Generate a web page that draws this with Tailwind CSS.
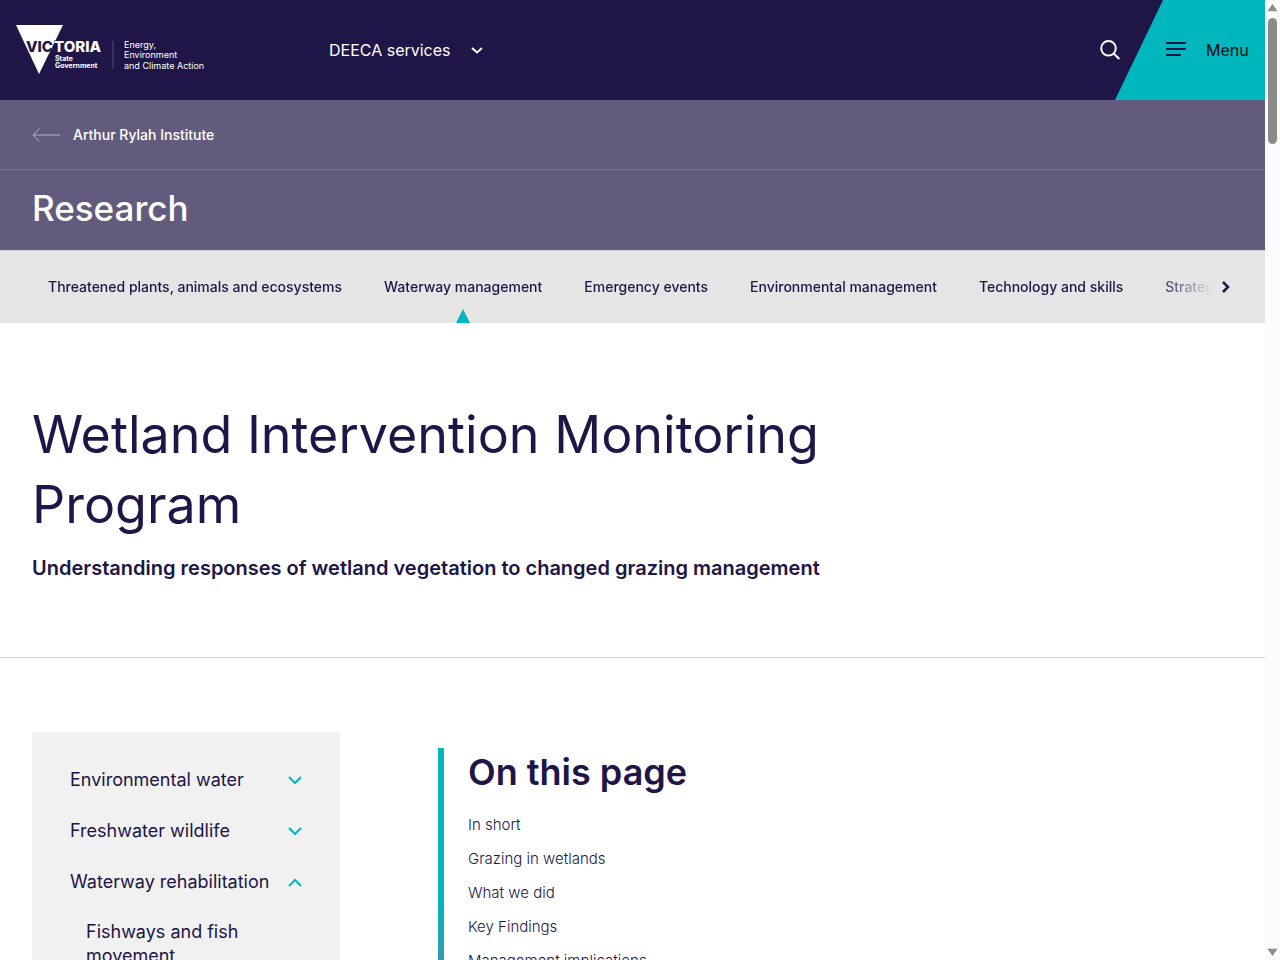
<!DOCTYPE html>
<html lang="en">
<head>
    <title>Wetland Intervention Monitoring Program</title>
    <meta charset="utf-8" />
    <meta name="viewport" content="width=device-width, initial-scale=1.0">
    <script src="https://cdn.jsdelivr.net/npm/@tailwindcss/browser@4"></script>
</head>
<body class="flex h-screen overflow-hidden bg-white font-['Inter',sans-serif] text-[#201547]">
    <div id="page" class="min-w-0 flex-1 overflow-hidden">
        <!-- Site header -->
        <header class="flex h-[100px] items-center bg-[#201547] pl-4 text-white">
            <a href="#" class="block w-[313px] shrink-0" aria-label="Victoria State Government">
                <svg width="200" height="50" viewBox="0 0 200 50" font-family="Inter, sans-serif" fill="#fff">
                    <defs>
                        <clipPath id="logo-triangle">
                            <path d="M0 0h47L23 49z"/>
                        </clipPath>
                    </defs>
                    <path d="M0 0h47L23 49z"/>
                    <g clip-path="url(#logo-triangle)">
                        <text x="10" y="27" font-size="15" font-weight="800" fill="#201547">VIC</text>
                    </g>
                    <text x="38" y="27" font-size="15" font-weight="800" stroke="#201547" stroke-width="1" paint-order="stroke">TORIA</text>
                    <text x="39" y="36" font-size="7" font-weight="700">State</text>
                    <text x="39" y="43" font-size="7" font-weight="700">Government</text>
                    <path d="M97 16v28" stroke="#574f75"/>
                    <text x="108" y="23" font-size="9" font-weight="400">Energy,</text>
                    <text x="108" y="33" font-size="9" font-weight="400">Environment</text>
                    <text x="108" y="44" font-size="9" font-weight="400">and Climate Action</text>
                </svg>
            </a>
            <button type="button" class="flex items-center gap-5 text-base">
                DEECA services
                <svg width="12" height="7" viewBox="0 0 12 7" fill="none" stroke="#fff" stroke-width="2">
                    <path d="M1 1l5 4.500L11 1"/>
                </svg>
            </button>
            <button type="button" class="ml-auto -mr-[5px]" aria-label="Search">
                <svg width="20" height="20" viewBox="0 0 20 20" fill="none" stroke="#fff" stroke-width="2">
                    <circle cx="8.500" cy="8.300" r="7.300"/>
                    <path d="M13.700 13.500l5.600 5.500"/>
                </svg>
            </button>
            <button type="button" class="flex h-full w-[150px] items-center bg-[#00b7bd] pl-[51px] text-base text-[#0b0b0b] [clip-path:polygon(48px_0,100%_0,100%_100%,0_100%)]">
                <svg class="mr-5" width="20" height="16" viewBox="0 0 20 16" fill="#201547">
                    <path d="M0 0h20v2H0zM0 6h20v2H0zM0 12h15v2H0z"/>
                </svg>
                Menu
            </button>
        </header>

        <!-- Section banner -->
        <div class="bg-[#635b7e] text-white">
            <div class="flex h-[70px] items-center border-b border-[#7d769b] px-8">
                <a href="#" class="flex items-center gap-3 text-sm font-medium">
                    <svg width="29" height="14" viewBox="0 0 29 14" fill="none" stroke="#b5b0c4">
                        <path d="M28 7H1M7.500 0.500L1 7l6.500 6.500"/>
                    </svg>
                    Arthur Rylah Institute
                </a>
            </div>
            <p class="flex h-20 items-center px-8 pb-1 text-[35px] font-medium">Research</p>
        </div>

        <!-- Section tabs -->
        <nav class="flex h-[73px] items-center border-t border-[#d0ced6] bg-[#e5e5e5] pr-[34px] pl-12 text-sm font-medium">
            <div class="flex h-full min-w-0 flex-1 items-center gap-[42px] overflow-hidden whitespace-nowrap [mask-image:linear-gradient(to_left,transparent,black_60px)]">
                <a href="#">Threatened plants, animals and ecosystems</a>
                <a href="#" class="relative flex h-full items-center">
                    Waterway management
                    <svg class="absolute bottom-0 left-1/2 -translate-x-1/2" width="14" height="14" viewBox="0 0 14 14" fill="#00b7bd">
                        <path d="M7 0l7 14H0z"/>
                    </svg>
                </a>
                <a href="#">Emergency events</a>
                <a href="#">Environmental management</a>
                <a href="#">Technology and skills</a>
                <a href="#">Strategic partnerships</a>
            </div>
            <button type="button" class="ml-2" aria-label="Next">
                <svg width="10" height="12" viewBox="0 0 10 12" fill="none" stroke="#201547" stroke-width="2.500">
                    <path d="M2 1l5 5-5 5"/>
                </svg>
            </button>
        </nav>

        <!-- Page title -->
        <section class="border-b border-[#d6d6d6] px-8 pt-[77px] pb-[73px]">
            <h1 class="max-w-[850px] text-[52px] leading-[70px]">Wetland Intervention Monitoring Program</h1>
            <p class="mt-3 text-xl leading-8 font-semibold">Understanding responses of wetland vegetation to changed grazing management</p>
        </section>

        <main class="flex items-start px-8 pt-[74px]">
            <aside class="w-[308px] shrink-0 border border-[#f6f6f6] bg-[#f1f1f1] px-[37px] py-[35px] text-lg leading-6">
                <ul class="flex flex-col gap-[27px]">
                    <li>
                        <button type="button" class="flex w-full items-center justify-between text-left">
                            Environmental water
                            <svg width="14" height="9" viewBox="0 0 14 9" fill="none" stroke="#00b7bd" stroke-width="2">
                                <path d="M1 1l6 6 6-6"/>
                            </svg>
                        </button>
                    </li>
                    <li>
                        <button type="button" class="flex w-full items-center justify-between text-left">
                            Freshwater wildlife
                            <svg width="14" height="9" viewBox="0 0 14 9" fill="none" stroke="#00b7bd" stroke-width="2">
                                <path d="M1 1l6 6 6-6"/>
                            </svg>
                        </button>
                    </li>
                    <li>
                        <button type="button" class="flex w-full items-center justify-between text-left">
                            Waterway rehabilitation
                            <svg width="14" height="9" viewBox="0 0 14 9" fill="none" stroke="#00b7bd" stroke-width="2">
                                <path d="M1 8l6-6 6 6"/>
                            </svg>
                        </button>
                        <a href="#" class="mt-[26px] ml-4 block w-[180px]">Fishways and fish movement</a>
                    </li>
                </ul>
            </aside>
            <div class="mt-4 ml-[98px] flex">
                <div class="w-1.5 bg-[linear-gradient(to_bottom,#00b7bd_150px,#2f9eae_210px,#635b7e_100%)]"></div>
                <div class="pl-6">
                    <h2 class="text-4xl leading-[48px] font-semibold">On this page</h2>
                    <ul class="mt-[17px] flex flex-col gap-2.5 pb-20 text-[15px] leading-6 font-light">
                        <li><a href="#">In short</a></li>
                        <li><a href="#">Grazing in wetlands</a></li>
                        <li><a href="#">What we did</a></li>
                        <li><a href="#">Key Findings</a></li>
                        <li><a href="#">Management implications</a></li>
                    </ul>
                </div>
            </div>
        </main>
    </div>

    <!-- Scroll track -->
    <div class="flex w-[15px] shrink-0 flex-col items-center bg-[#fcfcfc] py-1" aria-hidden="true">
        <svg width="9" height="8" viewBox="0 0 9 8" fill="#8b8b8b"><path d="M4.500 0L9 6.500v.8H0v-.8z"/></svg>
        <div class="mt-1.5 h-[126px] w-[9px] rounded-full bg-[#8b8b8b]"></div>
        <svg class="mt-auto" width="9" height="8" viewBox="0 0 9 8" fill="#8b8b8b"><path d="M4.500 8L9 1.500V.7H0v.8z"/></svg>
    </div>
</body>
</html>
